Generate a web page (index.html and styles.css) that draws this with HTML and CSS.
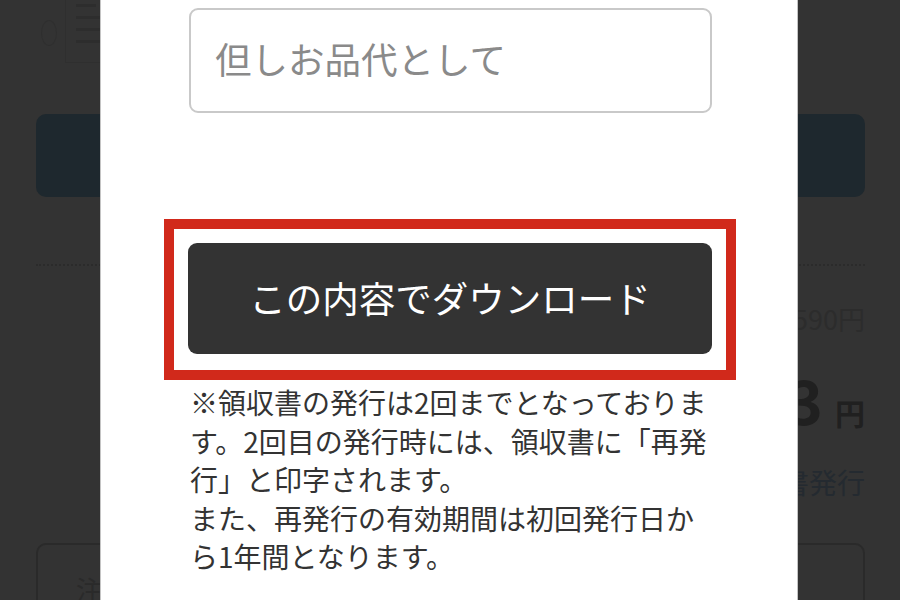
FILE: index.html
```html
<!DOCTYPE html>
<html lang="ja">
<head>
<meta charset="utf-8">
<title>領収書発行</title>
<link rel="stylesheet" href="styles.css">
</head>
<body>
<div class="page">
  <header class="page-head">
    <span class="logo-mark"></span>
    <div class="logo-card">
      <span class="lc-line short"></span>
      <span class="lc-line"></span>
      <span class="lc-line"></span>
      <span class="lc-line long"></span>
    </div>
  </header>
  <div class="cta">購入手続きへ</div>
  <hr class="dots">
  <div class="price-old">5,590円</div>
  <div class="price-now"><span class="num">5,033</span><span class="yen">円</span></div>
  <div class="receipt-link">領収書発行</div>
  <div class="note-box"><span class="note-text">注文内容</span><span class="note-arrow">‹</span></div>
</div>

<div class="modal">
  <input class="field" type="text" placeholder="但しお品代として">
  <div class="cta-frame">
    <button class="download" type="button">この内容でダウンロード</button>
  </div>
  <p class="notice">※領収書の発行は2回までとなっております。2回目の発行時には、領収書に「再発行」と印字されます。<br>また、再発行の有効期間は初回発行日から1年間となります。</p>
</div>
</body>
</html>
```

FILE: styles.css
```css
html, body {
  margin: 0;
  padding: 0;
}

body {
  width: 900px;
  height: 600px;
  overflow: hidden;
  position: relative;
  background: #333333;
  font-family: "Noto Sans CJK JP", "Noto Sans", sans-serif;
}

/* dimmed page behind the modal */
.page {
  padding: 0 35px 0 36px;
}

.page-head {
  height: 114px;
  display: flex;
  align-items: flex-start;
  gap: 8px;
}

.logo-mark {
  width: 14px;
  height: 24px;
  margin-top: 20px;
  margin-left: 5px;
  border: 1px solid #2f2f2f;
  border-radius: 50%;
}

.logo-card {
  width: 36px;
  height: 58px;
  border-left: 1px solid #2f2f2f;
  border-bottom: 1px solid #2f2f2f;
  padding: 4px 0 0 10px;
  display: flex;
  flex-direction: column;
  gap: 9px;
}

.lc-line {
  display: block;
  height: 3px;
  width: 26px;
  background: #2d2d2d;
}

.lc-line.short { width: 20px; }
.lc-line.long { width: 30px; }

.cta {
  height: 83px;
  border-radius: 10px;
  background: #1e282e;
  color: #1e282e;
  font-size: 26px;
  line-height: 83px;
  text-align: center;
}

.dots {
  margin: 67px 0 0;
  border: 0;
  border-top: 2px dotted #2b2b2b;
}

.price-old {
  margin-top: 33px;
  text-align: right;
  font-size: 27px;
  line-height: 40px;
  color: #2c2c2c;
}

.price-now {
  margin-top: 25px;
  height: 70px;
  display: flex;
  justify-content: flex-end;
  align-items: baseline;
  color: #202020;
  font-weight: bold;
}

.price-now .num {
  font-size: 60px;
  line-height: 70px;
}

.price-now .yen {
  font-size: 30px;
  line-height: 30px;
  margin-left: 12px;
}

.receipt-link {
  margin-top: 28px;
  text-align: right;
  font-size: 28px;
  line-height: 40px;
  color: #242a30;
}

.note-box {
  margin-top: 41px;
  height: 100px;
  border: 2px solid #2a2a2a;
  border-radius: 10px;
  display: flex;
  justify-content: space-between;
  align-items: flex-start;
  padding: 26px 30px 0 38px;
  font-size: 26px;
  line-height: 36px;
  color: #2a2a2a;
}

.note-arrow {
  font-size: 40px;
  line-height: 1;
  margin-top: 14px;
  transform: rotate(-90deg);
}

/* modal */
.modal {
  position: absolute;
  left: 100px;
  top: 0;
  width: 698px;
  height: 600px;
  box-sizing: border-box;
  background: #ffffff;
  border-left: 1px solid #c4c4c4;
  border-right: 1px solid #c4c4c4;
  padding: 8px 85px 0 88px;
}

.field {
  display: block;
  width: 100%;
  height: 105px;
  box-sizing: border-box;
  margin: 0;
  border: 2px solid #c9c9c9;
  border-radius: 9px;
  padding: 0 0 4px 24px;
  background: #fff;
  font-family: "Noto Sans CJK JP", sans-serif;
  font-size: 36.5px;
  color: #333;
  outline: none;
}

.field::placeholder {
  color: #8a8a8a;
}

.cta-frame {
  margin: 106px -24px 0 -25px;
  border: 10px solid #d1291b;
  padding: 14px 14px 16px 14px;
}

.download {
  display: block;
  width: 100%;
  height: 111px;
  margin: 0;
  padding: 0 0 2px;
  border: 0;
  border-radius: 9px;
  background: #333333;
  color: #ffffff;
  font-family: "Noto Sans CJK JP", sans-serif;
  font-size: 36.5px;
  text-align: center;
  cursor: pointer;
}

.notice {
  margin: 3px 0 0 1px;
  font-size: 28px;
  line-height: 38.5px;
  color: #333333;
  line-break: strict;
}
```
